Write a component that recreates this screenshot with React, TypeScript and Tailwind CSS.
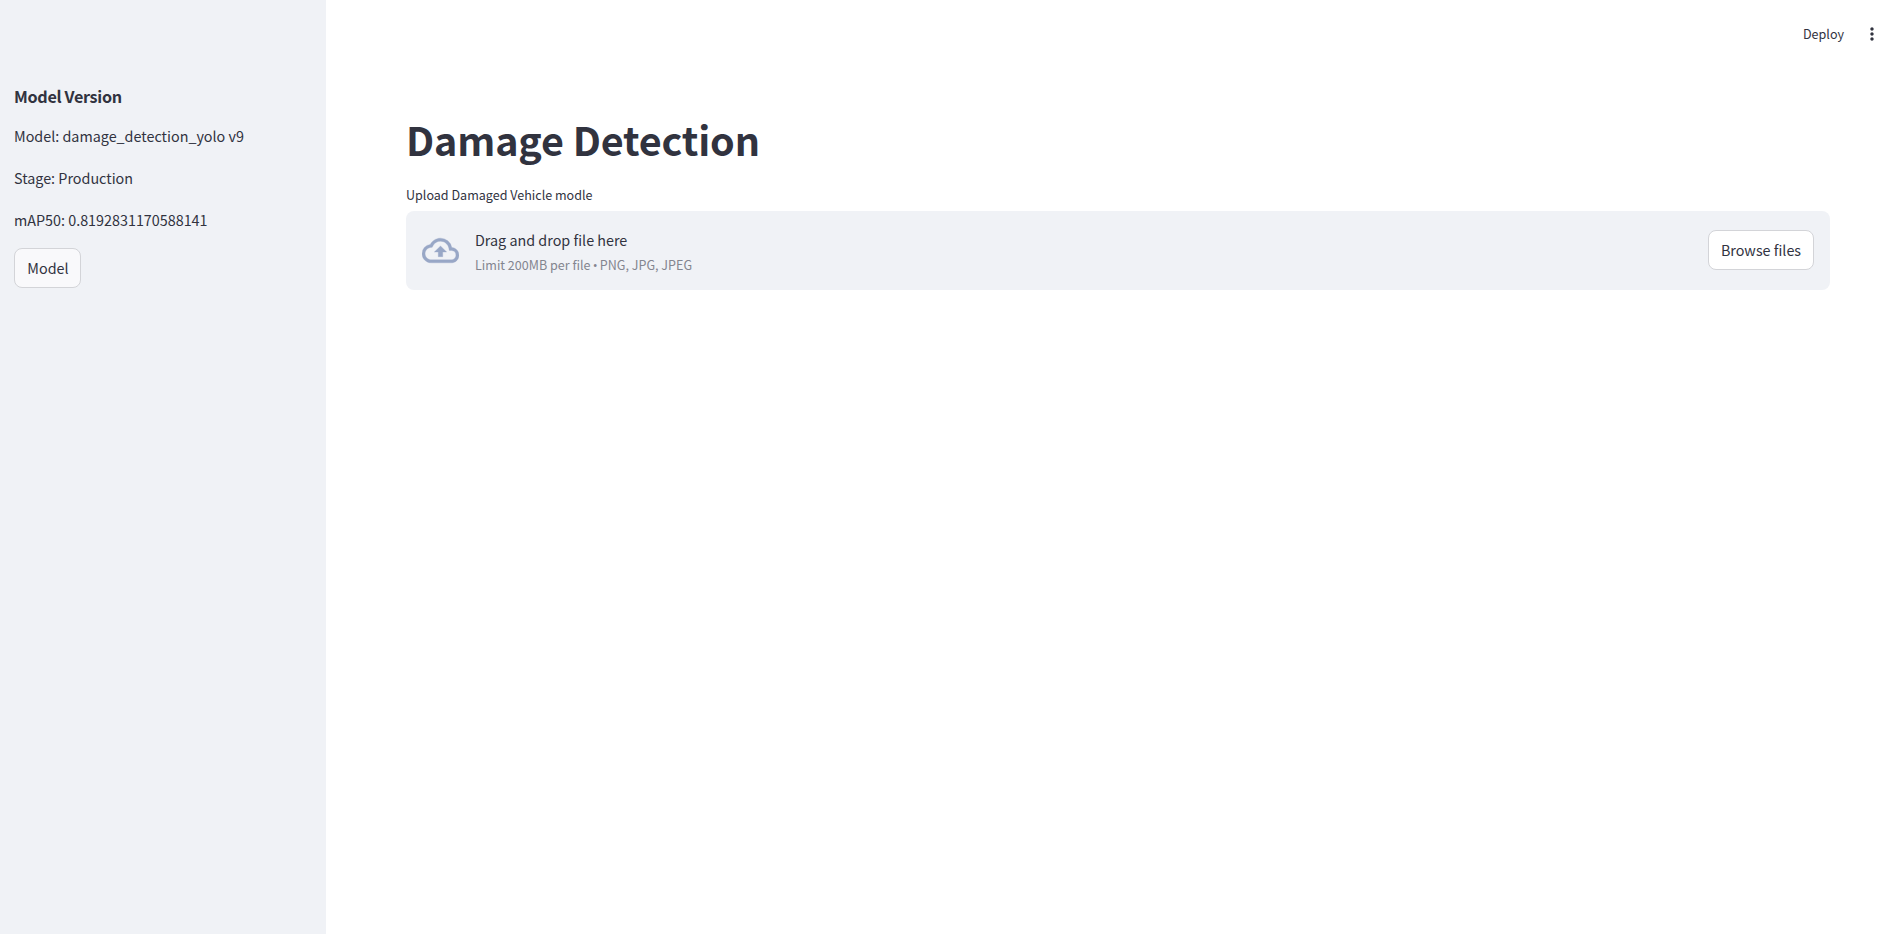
import type { ReactNode } from "react";

function OutlineButton({ children, className }: { children: ReactNode; className: string }) {
  return (
    <button
      type="button"
      className={`flex h-10 shrink-0 items-center justify-center rounded-lg border border-[#d3d4d8] text-[14.35px] leading-[26px] ${className}`}
    >
      {children}
    </button>
  );
}

function Sidebar() {
  return (
    <aside className="flex w-[326px] shrink-0 flex-col items-start bg-[#f0f2f6] pt-[85px] pl-[14px]">
      <h3 className="text-[16.2px] leading-[22px] font-bold tracking-[-0.33px] whitespace-nowrap">Model Version</h3>
      <div className="mt-4 flex flex-col gap-4 text-[14.35px] leading-[26px] whitespace-nowrap">
        <p>Model: damage_detection_yolo v9</p>
        <p>Stage: Production</p>
        <p>mAP50: 0.8192831170588141</p>
      </div>
      <OutlineButton className="mt-[15px] w-[67px] bg-[#f9f9fb] pl-px">Model</OutlineButton>
    </aside>
  );
}

function Toolbar() {
  return (
    <header className="flex h-[68px] items-center justify-end pr-2">
      <span className="text-[12.55px] leading-[22px]">Deploy</span>
      <svg viewBox="0 0 24 24" className="ml-[18px] h-5 w-5" fill="currentColor" aria-hidden="true">
        <path d="M12 8c1.1 0 2-.9 2-2s-.9-2-2-2-2 .9-2 2 .9 2 2 2zm0 2c-1.1 0-2 .9-2 2s.9 2 2 2 2-.9 2-2-.9-2-2-2zm0 6c-1.1 0-2 .9-2 2s.9 2 2 2 2-.9 2-2-.9-2-2-2z" />
      </svg>
    </header>
  );
}

function FileUploader() {
  return (
    <section className="flex h-[79px] items-center rounded-lg bg-[#f0f2f6] px-4">
      <svg
        viewBox="0 0 24 24"
        className="h-[37px] w-[37px] shrink-0"
        fill="#98a7c6"
        stroke="#98a7c6"
        strokeWidth="0.2"
        aria-hidden="true"
      >
        <path d="M19.35 10.04A7.49 7.49 0 0 0 12 4C9.11 4 6.6 5.64 5.35 8.04A5.994 5.994 0 0 0 0 14c0 3.31 2.69 6 6 6h13c2.76 0 5-2.24 5-5 0-2.64-2.05-4.78-4.65-4.96zM19 18H6c-2.21 0-4-1.79-4-4 0-2.05 1.53-3.76 3.56-3.97l1.07-.11.5-.95A5.469 5.469 0 0 1 12 6c2.62 0 4.88 1.86 5.39 4.43l.3 1.5 1.53.11A2.98 2.98 0 0 1 22 15c0 1.65-1.35 3-3 3zM8 13h2.55v3h2.9v-3H16l-4-4z" />
      </svg>
      <div className="ml-4 flex flex-col pt-px whitespace-nowrap">
        <span className="text-[14.35px] leading-[26px]">Drag and drop file here</span>
        <span className="mt-px text-[12.55px] leading-[22px] text-[#83858f]">
          Limit 200MB per file <span className="-mx-[0.6px] font-['Open_Sans',sans-serif] text-[13px] leading-none">•</span> PNG, JPG, JPEG
        </span>
      </div>
      <OutlineButton className="-mt-px ml-auto w-[106px] bg-white">Browse files</OutlineButton>
    </section>
  );
}

export default function App() {
  return (
    <div className="flex h-screen w-full overflow-hidden bg-white font-['Noto_Sans_CJK_SC',sans-serif] text-[#31333f]">
      <Sidebar />
      <div className="flex min-w-0 flex-1 flex-col">
        <Toolbar />
        <main className="flex flex-col pt-[45px] pr-[60px] pl-20">
          <h1 className="text-[39.5px] leading-[52px] font-bold tracking-[-0.15px] whitespace-nowrap">Damage Detection</h1>
          <p className="mt-[19px] mb-[5px] text-[12.55px] leading-[22px]">Upload Damaged Vehicle modle</p>
          <FileUploader />
        </main>
      </div>
    </div>
  );
}
